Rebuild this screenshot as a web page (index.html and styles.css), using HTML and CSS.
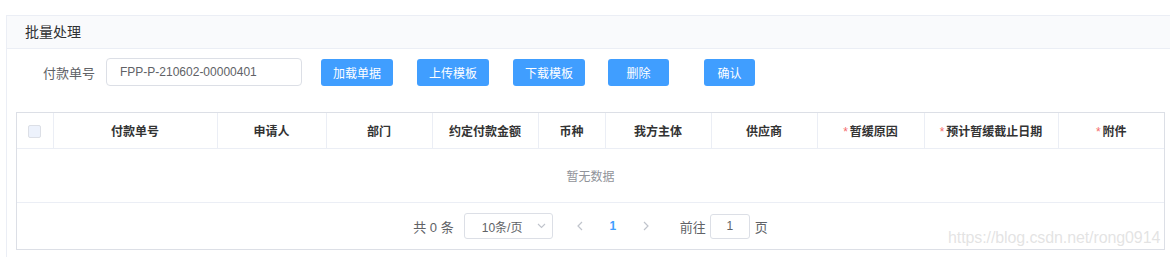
FILE: index.html
```html
<!DOCTYPE html>
<html lang="zh-CN">
<head>
  <meta charset="UTF-8">
  <title>批量处理</title>
  <link rel="stylesheet" href="styles.css">
</head>
<body>
<div class="card">
  <div class="card-header">批量处理</div>
  <div class="card-body">
    <div class="form-row">
      <label class="form-label">付款单号</label>
      <input class="form-input" type="text" value="FPP-P-210602-00000401">
      <button class="btn btn-load">加载单据</button>
      <button class="btn btn-upload">上传模板</button>
      <button class="btn btn-download">下载模板</button>
      <button class="btn btn-delete">删除</button>
      <button class="btn btn-confirm">确认</button>
    </div>

    <div class="table-box">
      <table class="data-table">
        <colgroup>
          <col style="width:36px">
          <col style="width:164px">
          <col style="width:109px">
          <col style="width:106px">
          <col style="width:106px">
          <col style="width:67px">
          <col style="width:106px">
          <col style="width:106px">
          <col style="width:107px">
          <col style="width:134px">
          <col style="width:106px">
        </colgroup>
        <thead>
          <tr>
            <th><span class="checkbox"></span></th>
            <th>付款单号</th>
            <th>申请人</th>
            <th>部门</th>
            <th>约定付款金额</th>
            <th>币种</th>
            <th>我方主体</th>
            <th>供应商</th>
            <th><span class="required">*</span>暂缓原因</th>
            <th><span class="required">*</span>预计暂缓截止日期</th>
            <th><span class="required">*</span>附件</th>
          </tr>
        </thead>
        <tbody>
          <tr>
            <td class="empty" colspan="11">暂无数据</td>
          </tr>
        </tbody>
      </table>

      <div class="pagination">
        <span class="total">共 0 条</span>
        <div class="page-size">
          <span>10条/页</span>
          <svg class="arrow-down" width="9" height="6" viewBox="0 0 9 6"><path d="M1 1l3.5 3.5L8 1" fill="none" stroke="#c0c4cc" stroke-width="1.1"/></svg>
        </div>
        <span class="pager-btn pager-prev">
          <svg width="6" height="10" viewBox="0 0 6 10"><path d="M5 1L1 5l4 4" fill="none" stroke="#c0c4cc" stroke-width="1.2"/></svg>
        </span>
        <span class="pager-num">1</span>
        <span class="pager-btn">
          <svg width="6" height="10" viewBox="0 0 6 10"><path d="M1 1l4 4-4 4" fill="none" stroke="#c0c4cc" stroke-width="1.2"/></svg>
        </span>
        <span class="jump">前往</span>
        <input class="jump-input" type="text" value="1">
        <span class="jump-unit">页</span>
      </div>
    </div>
  </div>
</div>

<div class="watermark">https://blog.csdn.net/rong0914</div>
</body>
</html>
```

FILE: styles.css
```css
body {
  margin: 0;
  font-family: "Liberation Sans", "Noto Sans CJK SC", sans-serif;
  background-color: #ffffff;
  color: #606266;
  overflow: hidden;
  height: 257px;
}

.card {
  margin: 15px 0 0 6px;
  width: 1200px;
  height: 241px;
  border: 1px solid #ebeef5;
  border-bottom: none;
  background-color: #fff;
}

.card-header {
  height: 32px;
  line-height: 32px;
  padding-left: 18px;
  background-color: #f9fafc;
  border-bottom: 1px solid #ebeef5;
  font-size: 14px;
  color: #303133;
}

.card-body {
  padding: 9px 0 0 9px;
}

.form-row {
  display: flex;
  align-items: center;
  height: 28px;
}

.form-label {
  width: 79px;
  padding-right: 11px;
  text-align: right;
  font-size: 13px;
  color: #606266;
}

.form-input {
  box-sizing: border-box;
  width: 196px;
  height: 28px;
  padding: 0 0 0 13px;
  border: 1px solid #dcdfe6;
  border-radius: 4px;
  font-family: inherit;
  font-size: 12px;
  color: #606266;
  outline: none;
}

.btn {
  box-sizing: border-box;
  height: 27px;
  padding: 0;
  border: none;
  border-radius: 3px;
  background-color: #409eff;
  color: #fff;
  font-family: inherit;
  font-size: 12px;
  cursor: pointer;
}

.btn-load { width: 72px; margin-left: 19px; }
.btn-upload { width: 72px; margin-left: 24px; }
.btn-download { width: 72px; margin-left: 24px; }
.btn-delete { width: 61px; margin-left: 23px; }
.btn-confirm { width: 51px; margin-left: 35px; }

.table-box {
  position: relative;
  margin-top: 26px;
  width: 1147px;
  border: 1px solid #dcdfe6;
}

.data-table {
  width: 1147px;
  table-layout: fixed;
  border-collapse: collapse;
  font-size: 12px;
}

.data-table th {
  height: 35px;
  padding: 0;
  border-right: 1px solid #ebeef5;
  border-bottom: 1px solid #ebeef5;
  color: #333;
  font-weight: bold;
  text-align: center;
}

.data-table th:last-child {
  border-right: none;
}

.checkbox {
  display: inline-block;
  box-sizing: border-box;
  width: 13px;
  height: 13px;
  margin-top: 4px;
  border: 1px solid #dcdfe6;
  border-radius: 2px;
  background-color: #edf2fc;
}

.required {
  color: #f56c6c;
  margin-right: 2px;
  font-weight: normal;
}

.empty {
  height: 53px;
  padding: 0;
  text-align: center;
  color: #909399;
  border-bottom: 1px solid #ebeef5;
}

.pagination {
  display: flex;
  align-items: center;
  justify-content: center;
  height: 46px;
  font-size: 13px;
  color: #606266;
}

.total {
  margin-right: 10px;
}

.page-size {
  box-sizing: border-box;
  display: flex;
  align-items: center;
  justify-content: space-between;
  width: 89px;
  height: 26px;
  padding: 0 6px 0 17px;
  border: 1px solid #dcdfe6;
  border-radius: 3px;
  font-size: 12px;
}

.pager-btn {
  display: flex;
  align-items: center;
  justify-content: center;
  width: 30px;
  height: 28px;
}

.pager-prev {
  margin-left: 12px;
}

.pager-num {
  width: 36px;
  text-align: center;
  color: #409eff;
  font-weight: bold;
  font-size: 12px;
}

.jump {
  margin-left: 19px;
  margin-right: 4px;
}

.jump-input {
  box-sizing: border-box;
  width: 40px;
  height: 25px;
  border: 1px solid #dcdfe6;
  border-radius: 3px;
  text-align: center;
  font-family: inherit;
  font-size: 12px;
  color: #606266;
  outline: none;
}

.jump-unit {
  margin-left: 5px;
}

.watermark {
  position: absolute;
  left: 948px;
  top: 229px;
  font-size: 16px;
  letter-spacing: -0.1px;
  color: rgba(200, 200, 200, 0.5);
  white-space: nowrap;
}
```
